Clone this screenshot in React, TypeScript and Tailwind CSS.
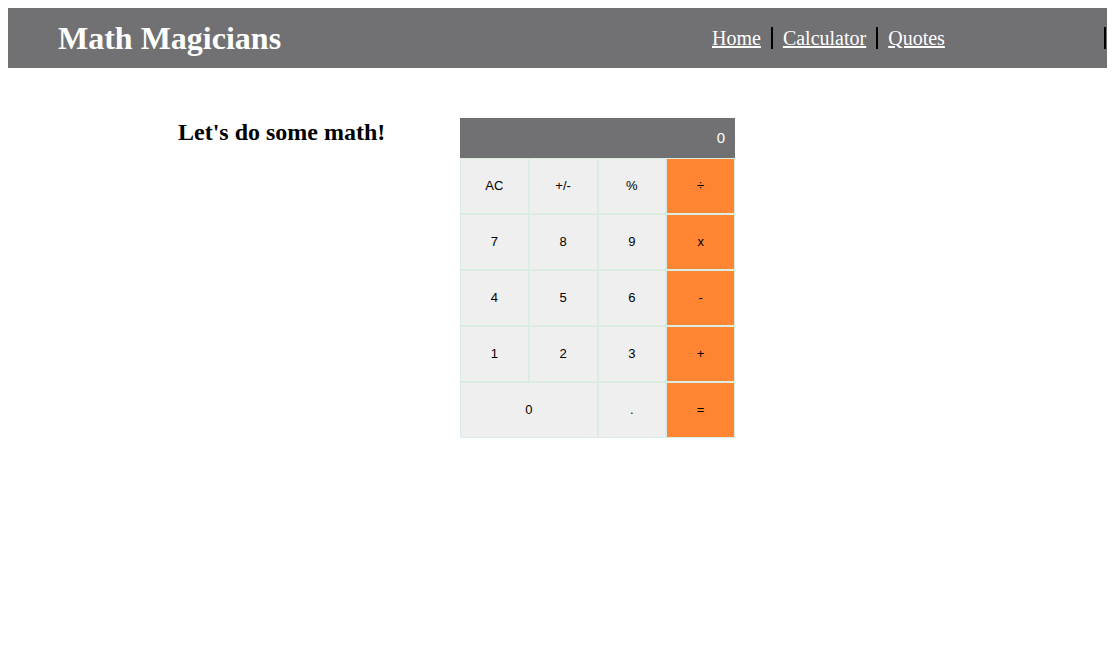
import React from "react";

const keys: { label: string; orange?: boolean; wide?: boolean }[] = [
  { label: "AC" }, { label: "+/-" }, { label: "%" }, { label: "÷", orange: true },
  { label: "7" }, { label: "8" }, { label: "9" }, { label: "x", orange: true },
  { label: "4" }, { label: "5" }, { label: "6" }, { label: "-", orange: true },
  { label: "1" }, { label: "2" }, { label: "3" }, { label: "+", orange: true },
  { label: "0", wide: true }, { label: "." }, { label: "=", orange: true },
];

export default function App() {
  return (
    <div className="min-h-[657px] bg-white p-2" style={{ fontFamily: '"Liberation Serif", serif' }}>
      <header className="flex h-[60px] items-center bg-[#717073] pl-[50px]">
        <h1 className="w-[644px] text-[32px] font-bold leading-none text-white">Math Magicians</h1>
        <nav className="flex flex-1 items-center">
          <a href="#" className="px-[10px] text-[20px] leading-[22px] text-white underline">Home</a>
          <span className="h-[22px] w-[2px] bg-black" />
          <a href="#" className="px-[10px] text-[20px] leading-[22px] text-white underline">Calculator</a>
          <span className="h-[22px] w-[2px] bg-black" />
          <a href="#" className="px-[10px] text-[20px] leading-[22px] text-white underline">Quotes</a>
          <span className="flex-1" />
          <span className="mr-[1px] h-[22px] w-[2px] bg-black" />
        </nav>
      </header>
      <main className="mt-[50px] flex pl-[170px]">
        <h2 className="w-[282px] pt-[1px] text-[24px] font-bold leading-[26px] text-black">Let's do some math!</h2>
        <div className="w-[275px]" style={{ fontFamily: '"Liberation Sans", Arial, sans-serif' }}>
          <div className="flex h-[40px] items-center justify-end bg-[#717073] pr-[10px] text-[15px] text-white">0</div>
          <div className="grid grid-cols-4">
            {keys.map((k) => (
              <button
                key={k.label}
                type="button"
                className={
                  "flex h-[56px] items-center justify-center border border-[#d9eee1] text-[13px] text-black " +
                  (k.orange ? "bg-[#ff8533] " : "bg-[#efefef] ") +
                  (k.wide ? "col-span-2" : "")
                }
              >
                {k.label}
              </button>
            ))}
          </div>
        </div>
      </main>
    </div>
  );
}
